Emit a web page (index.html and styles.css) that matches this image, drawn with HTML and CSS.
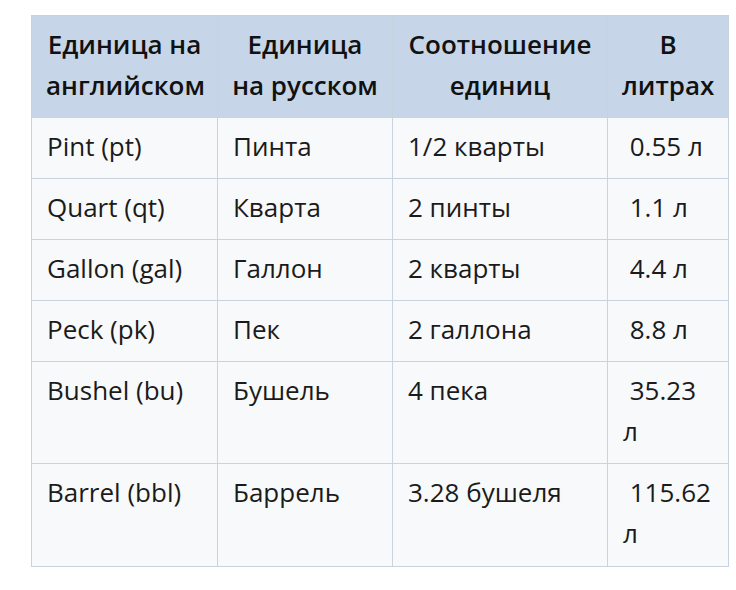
FILE: index.html
```html
<!DOCTYPE html>
<html lang="ru">
<head>
<meta charset="utf-8">
<link rel="stylesheet" href="styles.css">
</head>
<body>
<div class="wrap">
<table class="units">
  <colgroup>
    <col class="c1"><col class="c2"><col class="c3"><col class="c4">
  </colgroup>
  <thead>
    <tr>
      <th>Единица на английском</th>
      <th>Единица на русском</th>
      <th>Соотношение единиц</th>
      <th>В литрах</th>
    </tr>
  </thead>
  <tbody>
    <tr><td>Pint (pt)</td><td>Пинта</td><td>1/2 кварты</td><td>&nbsp;0.55 л</td></tr>
    <tr><td>Quart (qt)</td><td>Кварта</td><td>2 пинты</td><td>&nbsp;1.1 л</td></tr>
    <tr><td>Gallon (gal)</td><td>Галлон</td><td>2 кварты</td><td>&nbsp;4.4 л</td></tr>
    <tr><td>Peck (pk)</td><td>Пек</td><td>2 галлона</td><td>&nbsp;8.8 л</td></tr>
    <tr><td>Bushel (bu)</td><td>Бушель</td><td>4 пека</td><td>&nbsp;35.23 л</td></tr>
    <tr><td>Barrel (bbl)</td><td>Баррель</td><td>3.28 бушеля</td><td>&nbsp;115.62 л</td></tr>
  </tbody>
</table>
</div>
</body>
</html>
```
FILE: styles.css
```css
html, body {
  margin: 0;
  padding: 0;
  background: #ffffff;
}
.wrap {
  padding: 15px 0 0 31px;
}
.units {
  border-collapse: collapse;
  table-layout: fixed;
  width: 698px;
  font-family: "Open Sans", "Noto Sans", sans-serif;
  font-size: 26px;
  line-height: 41px;
  color: #1b1b1b;
  background: #f8f9fa;
}
.c1 { width: 186px; }
.c2 { width: 175px; }
.c3 { width: 215px; }
.c4 { width: 121px; }
.units th, .units td {
  border: 1px solid #c8d3e0;
  padding: 8px 14px 11px 15px;
  vertical-align: top;
}
.units th {
  background: #c6d6e8;
  font-weight: 600;
  text-align: center;
  color: #111;
  padding-left: 14px;
  padding-right: 14px;
}
.units td {
  text-align: left;
}
.units tbody tr:last-child td {
  padding-bottom: 12px;
}
```
